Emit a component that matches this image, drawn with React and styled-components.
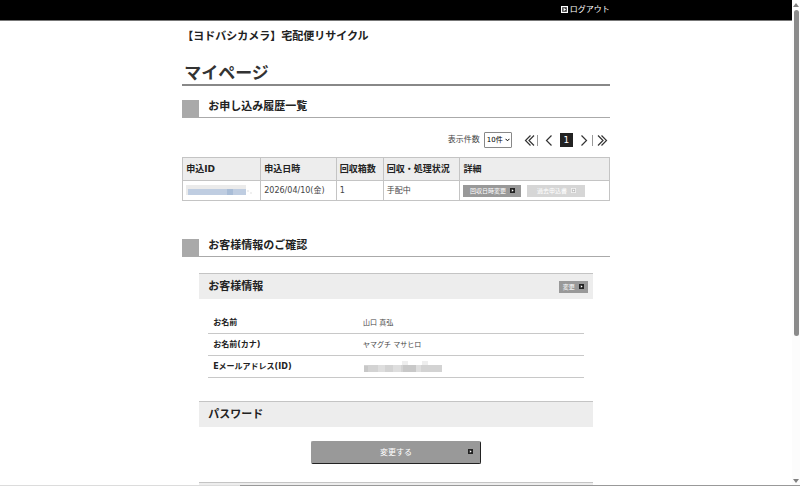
import React, { useState } from "react";
import styled, { createGlobalStyle } from "styled-components";

const GlobalStyle = createGlobalStyle`
  * {
    box-sizing: border-box;
  }

  body {
    margin: 0;
    background: #fff;
    color: #444;
    font-family: "DejaVu Sans", "Noto Sans CJK JP", sans-serif;
    font-size: 8px;
    line-height: 12px;
  }

  button,
  select {
    font-family: inherit;
  }
`;

// ----------------------------------------------------
// 画面全体
// ----------------------------------------------------
const Screen = styled.div`
  display: flex;
  height: 100vh;
  overflow: hidden;
`;

const Page = styled.div`
  flex: 1;
  min-width: 0;
  overflow: hidden;
`;

const Container = styled.div`
  width: 54%;
  min-width: 420px;
  margin: 0 auto;
`;

const ScrollTrack = styled.div`
  display: flex;
  flex-direction: column;
  align-items: center;
  width: 8px;
  padding: 3px 0;
  background: #fcfcfc;
`;

const ScrollThumb = styled.div`
  width: 5px;
  height: 68%;
  margin: 3px 0 auto;
  border-radius: 3px;
  background: #8b8b8b;
`;

const StatusEdge = styled.div`
  position: fixed;
  right: 0;
  bottom: 0;
  left: 0;
  height: 1px;
  background: linear-gradient(to right, #dcdcdc 30%, #999 30%);
`;

// ----------------------------------------------------
// ヘッダー
// ----------------------------------------------------
const TopBar = styled.header`
  background: #000;
  border-bottom: 1px solid #777;
`;

const TopBarInner = styled(Container)`
  display: flex;
  justify-content: flex-end;
  align-items: center;
  height: 20px;
`;

const LogoutLink = styled.a`
  display: flex;
  align-items: center;
  gap: 2px;
  color: #fff;
  text-decoration: none;

  svg {
    margin-bottom: 2px;
  }
`;

const SiteTitle = styled.p`
  margin: 0;
  padding: 8px 0 0;
  color: #222;
  font-size: 11px;
  font-weight: bold;
  line-height: 16px;
`;

const PageTitle = styled.h1`
  margin: 17px 0 0;
  padding: 0 2px;
  border-bottom: 2px solid #888;
  color: #333;
  font-size: 17px;
  line-height: 22px;
`;

// ----------------------------------------------------
// 見出し
// ----------------------------------------------------
const SectionTitle = styled.h2`
  display: flex;
  margin: 0;
  border-bottom: 1px solid #aaa;
  color: #222;
  font-size: 11px;
  line-height: 13px;

  &::before {
    content: "";
    width: 17px;
    height: 17px;
    margin-right: 9px;
    background: #a9a9a9;
  }
`;

const History = styled.section`
  margin-top: 14px;
`;

const Customer = styled.section`
  margin-top: 38px;
`;

const SubSection = styled.section`
  margin: ${({ $gap }) => $gap}px 17px 0;
`;

const SubHeader = styled.div`
  display: flex;
  justify-content: space-between;
  align-items: center;
  height: 26px;
  padding: 0 5px 0 9px;
  background: #ededed;
  border-top: 1px solid #c4c4c4;
`;

const SubTitle = styled.h3`
  margin: 0;
  color: #222;
  font-size: 11px;
  line-height: 16px;
`;

// ----------------------------------------------------
// ページャー
// ----------------------------------------------------
const PagerRow = styled.div`
  display: flex;
  justify-content: flex-end;
  align-items: center;
  height: 16px;
  margin: 14px 0 9px;
`;

const SelectLabel = styled.label`
  margin-right: 4px;
`;

const SelectBox = styled.span`
  position: relative;
  display: flex;
  margin-right: 12px;

  svg {
    position: absolute;
    top: 6px;
    right: 2px;
    pointer-events: none;
  }
`;

const Select = styled.select`
  appearance: none;
  width: 28px;
  height: 16px;
  padding: 0 0 0 2px;
  border: 1px solid #888;
  border-radius: 1px;
  background: #fff;
  color: #000;
  font-size: 7px;
`;

const Pager = styled.nav`
  display: flex;
  align-items: center;
  gap: 7px;
  padding-right: 2px;
`;

const PagerLink = styled.a`
  display: flex;
  color: #333;
`;

const PagerGroup = styled.span`
  display: flex;
  align-items: center;
  gap: ${({ $gap }) => $gap}px;
`;

const Divider = styled.span`
  width: 1px;
  height: 11px;
  background: #999;
`;

const CurrentPage = styled.span`
  width: 13px;
  height: 14px;
  background: #222;
  color: #fff;
  font-size: 9px;
  line-height: 14px;
  text-align: center;
`;

// ----------------------------------------------------
// 履歴テーブル
// ----------------------------------------------------
const Table = styled.table`
  width: 100%;
  border-collapse: collapse;
  table-layout: fixed;
`;

const Th = styled.th`
  width: ${({ $width }) => $width};
  height: 23px;
  padding: 0 3px;
  border: 1px solid #c4c4c4;
  background: #ededed;
  color: #222;
  font-size: 9px;
  text-align: left;
  white-space: nowrap;
`;

const Td = styled.td`
  height: 20px;
  padding: 0 3px;
  border: 1px solid #c4c4c4;
  white-space: nowrap;
`;

const Actions = styled.div`
  display: flex;
  gap: 6px;
`;

// ----------------------------------------------------
// ボタン
// ----------------------------------------------------
const SmallButton = styled.button`
  display: flex;
  justify-content: center;
  align-items: center;
  gap: 4px;
  width: ${({ $short }) => ($short ? 29 : 58)}px;
  height: 12px;
  padding: 0;
  border: 0;
  background: #999;
  color: #fff;
  font-size: 6px;
  line-height: 12px;
  white-space: nowrap;

  &:disabled {
    background: #d6d6d6;
  }
`;

const ButtonArea = styled.div`
  display: flex;
  justify-content: center;
  padding-top: 14px;
`;

const WideButton = styled.button`
  display: grid;
  grid-template-columns: 1fr auto 1fr;
  align-items: center;
  width: 43%;
  height: 23px;
  padding: 0 7px 2px;
  border: 1px solid #999;
  border-right-color: #222;
  border-bottom: 1px solid #222;
  border-radius: 2px;
  background: #999;
  color: #fff;
  font-size: 8px;

  span {
    grid-column: 2;
  }

  svg {
    justify-self: end;
  }
`;

// ----------------------------------------------------
// お客様情報
// ----------------------------------------------------
const InfoList = styled.dl`
  margin: 13px 9px 0;
`;

const InfoRow = styled.div`
  display: flex;
  align-items: center;
  height: 22px;
  padding: 0 5px;
  border-bottom: 1px solid #c8c8c8;
`;

const InfoTerm = styled.dt`
  width: 41%;
  color: #222;
  font-weight: bold;
`;

const InfoValue = styled.dd`
  margin: 0;
  font-size: 7px;
`;

// ----------------------------------------------------
// アイコン
// ----------------------------------------------------
const BoxArrow = ({ size = 6, frame = "#222", fill = "#222", mark = "#fff" }) => (
  <svg width={size} height={size} viewBox="0 0 6 6" aria-hidden="true">
    <rect width="6" height="6" fill={frame} />
    <rect x="1" y="1" width="4" height="4" fill={fill} />
    <path d="M2.2 1.5 4.4 3 2.2 4.5z" fill={mark} />
  </svg>
);

const Chevron = ({ double, right }) => (
  <svg
    width={double ? 11 : 8}
    height="11"
    viewBox={double ? "0 0 11 11" : "0 0 8 11"}
    fill="none"
    stroke="currentColor"
    strokeWidth="1.2"
    aria-hidden="true"
  >
    {right ? (
      <path d={double ? "M1 .5l5 5-5 5M4.5 .5l5 5-5 5" : "M1.5 .5l5 5-5 5"} />
    ) : (
      <path d={double ? "M6.5 .5l-5 5 5 5M10 .5l-5 5 5 5" : "M6.5 .5l-5 5 5 5"} />
    )}
  </svg>
);

const ScrollArrow = ({ down }) => (
  <svg width="6" height="4" viewBox="0 0 6 4" aria-hidden="true">
    <path d={down ? "M0 0h6L3 4z" : "M0 4h6L3 0z"} fill="#808080" />
  </svg>
);

const MaskedId = () => (
  <svg width="70" height="12" viewBox="0 0 70 12" display="block" aria-hidden="true">
    <path d="M0 0h60v4H0zM0 4h3v6H0z" fill="#ebebeb" />
    <path d="M2 4h58v6H2z" fill="#bfcde1" />
    <path d="M41 4h6v6h-6z" fill="#a9bdd7" />
    <path d="M61 5h2v2h-2zM64 7h2v2h-2z" fill="#f0f0f0" />
  </svg>
);

const MaskedMail = () => (
  <svg width="79" height="12" viewBox="0 0 79 12" display="block" aria-hidden="true">
    <path d="M39 0h6v4h-6zM59 0h6v4h-6z" fill="#eee" />
    <path d="M1 4h78v7H1z" fill="#d3d3d3" />
    <path d="M15 4h7v7h-7zM30 4h8v7h-8zM53 4h5v7h-5z" fill="#dedede" />
    <path d="M1 5h4v6H1zM40 4h13v7H40z" fill="#c8c8c8" />
  </svg>
);

const customerInfo = [
  { term: "お名前", value: "山口 真弘" },
  { term: "お名前(カナ)", value: "ヤマグチ マサヒロ" },
  { term: "Eメールアドレス(ID)", value: <MaskedMail /> },
];

// ----------------------------------------------------
// マイページ
// ----------------------------------------------------
const App = () => {
  const [pageSize, setPageSize] = useState("10");

  return (
    <Screen>
      <GlobalStyle />
      <Page>
        <TopBar>
          <TopBarInner>
            <LogoutLink href="#logout">
              <BoxArrow size={7} frame="#fff" fill="#333" />
              ログアウト
            </LogoutLink>
          </TopBarInner>
        </TopBar>

        <Container as="main">
          <SiteTitle>【ヨドバシカメラ】宅配便リサイクル</SiteTitle>
          <PageTitle>マイページ</PageTitle>

          <History>
            <SectionTitle>お申し込み履歴一覧</SectionTitle>
            <PagerRow>
              <SelectLabel htmlFor="page-size">表示件数</SelectLabel>
              <SelectBox>
                <Select
                  id="page-size"
                  value={pageSize}
                  onChange={(e) => setPageSize(e.target.value)}
                >
                  <option value="10">10件</option>
                  <option value="20">20件</option>
                  <option value="50">50件</option>
                </Select>
                <svg width="5" height="4" viewBox="0 0 5 4" aria-hidden="true">
                  <path d="M.5 .8l2 2 2-2" fill="none" stroke="#000" />
                </svg>
              </SelectBox>
              <Pager>
                <PagerGroup $gap={2}>
                  <PagerLink href="#first" aria-label="最初"><Chevron double /></PagerLink>
                  <Divider />
                </PagerGroup>
                <PagerLink href="#prev" aria-label="前へ"><Chevron /></PagerLink>
                <CurrentPage>1</CurrentPage>
                <PagerGroup $gap={4}>
                  <PagerLink href="#next" aria-label="次へ"><Chevron right /></PagerLink>
                  <Divider />
                  <PagerLink href="#last" aria-label="最後"><Chevron double right /></PagerLink>
                </PagerGroup>
              </Pager>
            </PagerRow>

            <Table>
              <thead>
                <tr>
                  <Th $width="18.3%">申込ID</Th>
                  <Th $width="17.7%">申込日時</Th>
                  <Th $width="11%">回収箱数</Th>
                  <Th $width="18%">回収・処理状況</Th>
                  <Th>詳細</Th>
                </tr>
              </thead>
              <tbody>
                <tr>
                  <Td><MaskedId /></Td>
                  <Td>2026/04/10(金)</Td>
                  <Td>1</Td>
                  <Td>手配中</Td>
                  <Td>
                    <Actions>
                      <SmallButton type="button">
                        回収日時変更
                        <BoxArrow size={5} />
                      </SmallButton>
                      <SmallButton type="button" disabled>
                        過去申込書
                        <BoxArrow size={5} frame="#f4f4f4" fill="#bbb" />
                      </SmallButton>
                    </Actions>
                  </Td>
                </tr>
              </tbody>
            </Table>
          </History>

          <Customer>
            <SectionTitle>お客様情報のご確認</SectionTitle>
            <SubSection $gap={16}>
              <SubHeader>
                <SubTitle>お客様情報</SubTitle>
                <SmallButton type="button" $short>
                  変更
                  <BoxArrow size={5} />
                </SmallButton>
              </SubHeader>
              <InfoList>
                {customerInfo.map((item) => (
                  <InfoRow key={item.term}>
                    <InfoTerm>{item.term}</InfoTerm>
                    <InfoValue>{item.value}</InfoValue>
                  </InfoRow>
                ))}
              </InfoList>
            </SubSection>

            <SubSection $gap={23}>
              <SubHeader>
                <SubTitle>パスワード</SubTitle>
              </SubHeader>
              <ButtonArea>
                <WideButton type="button">
                  <span>変更する</span>
                  <BoxArrow size={5} />
                </WideButton>
              </ButtonArea>
            </SubSection>

            <SubSection $gap={18}>
              <SubHeader />
            </SubSection>
          </Customer>
        </Container>
      </Page>

      <ScrollTrack>
        <ScrollArrow />
        <ScrollThumb />
        <ScrollArrow down />
      </ScrollTrack>
      <StatusEdge />
    </Screen>
  );
};

export default App;
